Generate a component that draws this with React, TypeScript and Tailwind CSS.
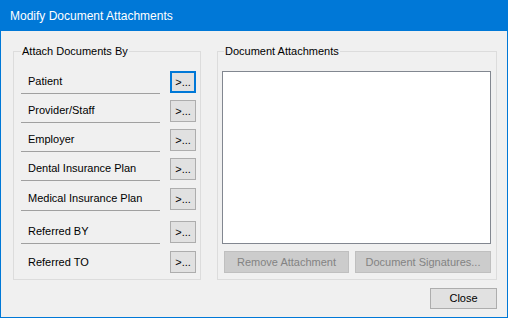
const rows = [
  { label: 'Patient', gap: 'mt-0', line: true, focus: true },
  { label: 'Provider/Staff', gap: 'mt-[6px]', line: true },
  { label: 'Employer', gap: 'mt-[6px]', line: true },
  { label: 'Dental Insurance Plan', gap: 'mt-[6px]', line: true },
  { label: 'Medical Insurance Plan', gap: 'mt-[7px]', line: true },
  { label: 'Referred BY', gap: 'mt-[10px]', line: true },
  { label: 'Referred TO', gap: 'mt-[7px]', line: false },
];

function PickButton({ focus }: { focus?: boolean }) {
  return (
    <button
      className={
        focus
          ? 'h-[22px] w-[26px] shrink-0 border-2 border-[#0078d7] bg-[#e1e1e1] leading-none'
          : 'h-[22px] w-[26px] shrink-0 border border-[#adadad] bg-[#e1e1e1] leading-none'
      }
    >
      &gt;...
    </button>
  );
}

export default function App() {
  return (
    <div
      className="w-[508px] h-[318px] flex flex-col bg-[#f0f0f0] border-x border-b border-[#0078d7] text-black text-[11px]"
      style={{ fontFamily: '"Liberation Sans", Arial, sans-serif' }}
    >
      <div className="h-[31px] shrink-0 bg-[#0078d7] text-white text-[12px] flex items-center pl-[9px]">
        Modify Document Attachments
      </div>

      <div className="flex gap-[16px] pl-[12px] pr-[10px] pt-[13px]">
        <fieldset className="w-[188px] min-w-0 h-[236px] border border-[#dcdcdc] pl-[7px] pr-[4px] pt-[13px]">
          <legend className="px-[1px] leading-[14px]">Attach Documents By</legend>
          {rows.map((r) => (
            <div key={r.label} className={`flex items-start gap-[10px] ${r.gap}`}>
              <div
                className={
                  r.line
                    ? 'w-[139px] h-[23px] border-b border-[#a0a0a0] pl-[7px] pb-[1px] flex items-center'
                    : 'w-[139px] h-[23px] pl-[7px] pb-[1px] flex items-center'
                }
              >
                {r.label}
              </div>
              <PickButton focus={r.focus} />
            </div>
          ))}
        </fieldset>

        <fieldset className="flex-1 min-w-0 h-[236px] border border-[#dcdcdc] pl-[4px] pr-[5px] pt-[13px] flex flex-col">
          <legend className="ml-[2px] px-[1px] leading-[14px]">Document Attachments</legend>
          <div className="h-[173px] border border-[#828790] bg-white" />
          <div className="flex gap-[6px] mt-[7px] pl-[2px]">
            <button className="w-[125px] h-[22px] bg-[#cccccc] border border-[#bfbfbf] text-[#838383]">
              Remove Attachment
            </button>
            <button className="flex-1 h-[22px] bg-[#cccccc] border border-[#bfbfbf] text-[#838383]">
              Document Signatures...
            </button>
          </div>
        </fieldset>
      </div>

      <div className="flex justify-end pr-[10px] pt-[8px]">
        <button className="w-[67px] h-[21px] bg-[#e1e1e1] border border-[#adadad]">Close</button>
      </div>
    </div>
  );
}
